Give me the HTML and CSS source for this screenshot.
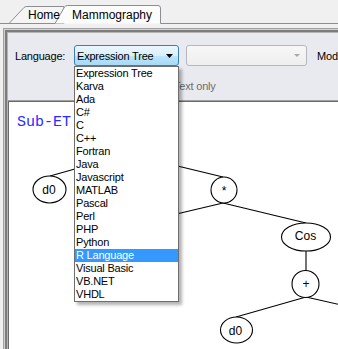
FILE: index.html
```html
<!DOCTYPE html>
<html>
<head>
<meta charset="utf-8">
<link rel="stylesheet" href="styles.css">
</head>
<body>
  <div class="tabstrip">
    <svg class="tab-shapes" width="338" height="24" viewBox="0 0 338 24">
      <path d="M0 23.5 H10" stroke="#8c8e94" fill="none"/>
      <path d="M9 23.5 L24 7.5 Q25 6.5 27 6.5 L64 6.5 L64 23.5 Z" fill="#f5f5f5" stroke="#8c8e94"/>
      <path d="M55 23.5 L64.5 7 Q65.5 5.5 67.5 5.5 L158 5.5 Q160.5 5.5 160.5 8 L160.5 23.5" fill="#fcfcfc" stroke="#8c8e94"/>
      <path d="M160.5 23.5 H338" stroke="#8c8e94" fill="none"/>
    </svg>
    <span class="tab tab-home">Home</span>
    <span class="tab tab-active">Mammography</span>
  </div>
  <div class="frame">
    <div class="toolbar">
      <div class="row">
        <span class="label">Language:</span>
        <div class="combo-wrap">
          <div class="combo combo-hot">
            <span>Expression Tree</span>
            <svg width="7" height="4" viewBox="0 0 7 4"><path d="M0 0 H7 L3.5 4 Z" fill="#000"/></svg>
          </div>
          <ul class="dropdown">
            <li>Expression Tree</li>
            <li>Karva</li>
            <li>Ada</li>
            <li>C#</li>
            <li>C</li>
            <li>C++</li>
            <li>Fortran</li>
            <li>Java</li>
            <li>Javascript</li>
            <li>MATLAB</li>
            <li>Pascal</li>
            <li>Perl</li>
            <li>PHP</li>
            <li>Python</li>
            <li class="sel">R Language</li>
            <li>Visual Basic</li>
            <li>VB.NET</li>
            <li>VHDL</li>
          </ul>
        </div>
        <div class="combo combo-disabled">
          <span></span>
          <svg width="6" height="3" viewBox="0 0 6 3"><path d="M0 0 H6 L3 3 Z" fill="#a8a8a8"/></svg>
        </div>
        <span class="label mod">Mod</span>
      </div>
      <div class="row row2">
        <span class="check"></span>
        <span class="check-label">Text only</span>
      </div>
    </div>
    <div class="canvas">
      <div class="subet">Sub-ET</div>
      <svg class="tree" width="330" height="248" viewBox="0 0 330 248">
        <g transform="translate(-8,-101)" stroke="#000" stroke-width="1.1" fill="#fff">
          <line x1="50" y1="176" x2="128" y2="154"/>
          <line x1="223" y1="177" x2="128" y2="154"/>
          <line x1="223" y1="203" x2="130" y2="225"/>
          <line x1="223" y1="203" x2="306" y2="223"/>
          <line x1="306" y1="251" x2="306" y2="271"/>
          <line x1="306" y1="297" x2="236" y2="317"/>
          <line x1="306" y1="297" x2="346" y2="306"/>
          <ellipse cx="49.5" cy="189.5" rx="16.5" ry="13.5"/>
          <ellipse cx="224" cy="190" rx="13" ry="13"/>
          <ellipse cx="306" cy="237" rx="24.5" ry="14"/>
          <ellipse cx="305.5" cy="284" rx="13.5" ry="13.5"/>
          <ellipse cx="236.5" cy="330" rx="16" ry="13"/>
        </g>
        <g transform="translate(-8,-101)" class="node-text">
          <text x="49" y="194.3">d0</text>
          <text x="224" y="194.7">*</text>
          <text x="305.5" y="240.3">Cos</text>
          <text x="306" y="287.8">+</text>
          <text x="235.5" y="334.8">d0</text>
        </g>
      </svg>
    </div>
  </div>
</body>
</html>
```
FILE: styles.css
```css
* {
  box-sizing: border-box;
  margin: 0;
  padding: 0;
}

html,
body {
  width: 338px;
  height: 349px;
  overflow: hidden;
}

body {
  background: #f0f0f0;
  font-family: "Liberation Sans", Arial, sans-serif;
  font-size: 11px;
  color: #000;
  display: flex;
  flex-direction: column;
}

.tabstrip {
  position: relative;
  flex: none;
  height: 24px;
  display: flex;
  padding-left: 28px;
}

.tab-shapes {
  position: absolute;
  left: 0;
  top: 0;
}

.tab {
  position: relative;
  font-size: 12px;
  line-height: 14px;
  padding-top: 8px;
  color: #000;
}

.tab-home {
  width: 44px;
}

.frame {
  flex: 1;
  min-height: 0;
  margin: 4px 0 0 3px;
  padding: 5px 0 0 5px;
  background: #e8eaf0;
  box-shadow: inset 1px 1px 0 #a0a0a0, inset 2px 2px 0 #d2d2d2, inset 4px 4px 0 #7c7c7c, inset 5px 5px 0 #b4b4b4;
  display: flex;
  flex-direction: column;
}

.toolbar {
  flex: none;
  height: 67px;
  padding: 12px 0 0 7px;
}

.row {
  display: flex;
  align-items: center;
  height: 21px;
  white-space: nowrap;
}

.label {
  width: 59px;
  flex: none;
  letter-spacing: -0.2px;
}

.combo-wrap {
  position: relative;
  flex: none;
  width: 105px;
  height: 21px;
}

.combo {
  height: 21px;
  border-radius: 3px;
  display: flex;
  align-items: center;
  justify-content: space-between;
  padding: 0 5px 0 2px;
  letter-spacing: -0.2px;
}

.combo-hot {
  width: 105px;
  border: 1px solid #3c7fb1;
  background: linear-gradient(#eaf6fd, #d9f0fc 50%, #bee6fd 50%, #a7d9f5);
}

.combo-disabled {
  flex: none;
  width: 121px;
  margin-left: 7px;
  padding-right: 6px;
  border: 1px solid #b4b8bc;
  background: linear-gradient(#f7f7f7, #eeeeee);
}

.mod {
  width: auto;
  margin-left: 10px;
}

.dropdown {
  position: absolute;
  top: 21px;
  left: 0;
  z-index: 10;
  width: 105px;
  list-style: none;
  background: #fff;
  border: 1px solid #6e6e6e;
  box-shadow: 3px 3px 3px rgba(0, 0, 0, 0.3);
}

.dropdown li {
  height: 13px;
  line-height: 13px;
  padding-left: 1px;
  letter-spacing: -0.2px;
  white-space: nowrap;
}

.dropdown .sel {
  background: #3399ff;
  color: #fff;
}

.row2 {
  margin-top: 13px;
  height: 14px;
}

.check {
  flex: none;
  width: 13px;
  height: 13px;
  margin-left: 142px;
  margin-right: 4px;
  border: 1px solid #b0b0b0;
  background: #f4f4f4;
}

.check-label {
  color: #6d6d6d;
  letter-spacing: -0.2px;
}

.canvas {
  flex: 1;
  position: relative;
  background: #fff;
  border-top: 1px solid #a0a0a0;
  box-shadow: inset 1px 1px 0 #6a6a6a;
  padding: 13px 0 0 9px;
}

.subet {
  font-family: "Liberation Mono", "Courier New", monospace;
  font-size: 15px;
  line-height: 17px;
  color: #2a2aff;
}

.tree {
  position: absolute;
  left: 0;
  top: 0;
  overflow: visible;
}

.node-text text {
  font-family: "Liberation Sans", Arial, sans-serif;
  font-size: 12px;
  text-anchor: middle;
  fill: #000;
}
```
